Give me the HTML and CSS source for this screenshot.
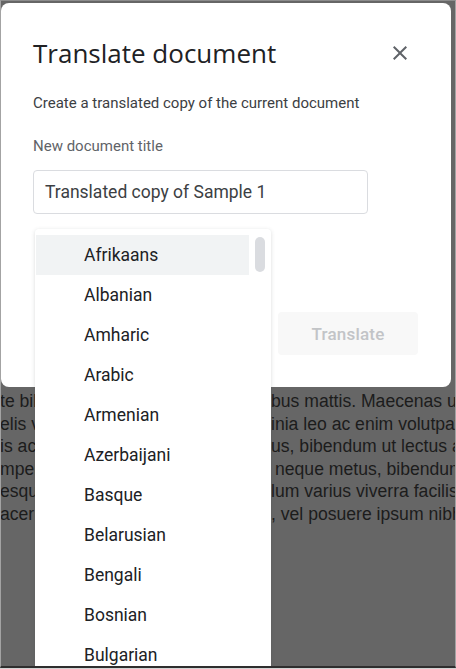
FILE: index.html
```html
<!DOCTYPE html>
<html lang="en">
<head>
<meta charset="utf-8">
<title>Translate document</title>
<link rel="stylesheet" href="styles.css">
</head>
<body>
<div class="frame">
  <div class="doc">
    <div class="line"><span class="l">te bibendum</span><span class="m"></span><span class="r">bus mattis. Maecenas ut</span></div>
    <div class="line"><span class="l">elis vitae</span><span class="m"></span><span class="r">inia leo ac enim volutpat</span></div>
    <div class="line"><span class="l">is ac</span><span class="m"></span><span class="r">us, bibendum ut lectus a</span></div>
    <div class="line"><span class="l">mper</span><span class="m"></span><span class="r ind">neque metus, bibendum</span></div>
    <div class="line"><span class="l">esque</span><span class="m"></span><span class="r">lum varius viverra facilisis</span></div>
    <div class="line"><span class="l">acer</span><span class="m"></span><span class="r">, vel posuere ipsum nibh</span></div>
  </div>

  <div class="dialog">
    <div class="dlg-head">
      <h1 class="dlg-title">Translate document</h1>
      <button class="close-btn" aria-label="Close">
        <svg width="24" height="24" viewBox="0 0 24 24"><path d="M19 6.41L17.59 5 12 10.59 6.41 5 5 6.41 10.59 12 5 17.59 6.41 19 12 13.41 17.59 19 19 17.59 13.41 12z" fill="#5f6368"/></svg>
      </button>
    </div>
    <p class="dlg-sub">Create a translated copy of the current document</p>
    <label class="dlg-label">New document title</label>
    <div class="input">Translated copy of Sample 1</div>
    <div class="select-space"></div>
    <div class="actions">
      <button class="btn-translate">Translate</button>
    </div>
  </div>

  <div class="dropdown">
    <ul class="list">
      <li class="item active">Afrikaans</li>
      <li class="item">Albanian</li>
      <li class="item">Amharic</li>
      <li class="item">Arabic</li>
      <li class="item">Armenian</li>
      <li class="item">Azerbaijani</li>
      <li class="item">Basque</li>
      <li class="item">Belarusian</li>
      <li class="item">Bengali</li>
      <li class="item">Bosnian</li>
      <li class="item">Bulgarian</li>
      <li class="item">Catalan</li>
    </ul>
    <div class="scroll"><div class="thumb"></div></div>
  </div>
</div>
</body>
</html>
```

FILE: styles.css
```css
* { box-sizing: border-box; }
html, body { margin: 0; padding: 0; }
html { background: #d4d4d4; }
body { width: 456px; height: 669px; overflow: hidden; }

.frame {
  position: relative;
  width: 456px;
  height: 668px;
  border-left: 1px solid #a3a3a3;
  border-right: 1px solid #a3a3a3;
  border-top: 1px solid #8c8c8c;
  border-bottom: 2px solid #2e2e2e;
  background: #666666;
  overflow: hidden;
}

.doc {
  padding-top: 389px;
  font-family: "Liberation Sans", Arial, sans-serif;
  font-size: 17.6px;
  line-height: 22.5px;
  color: #1c1c1c;
}
.line {
  display: grid;
  grid-template-columns: 34px 236px 1fr;
  white-space: nowrap;
}
.line span { overflow: hidden; }
.l { text-indent: -1px; }
.r.ind { padding-left: 4px; }

.dialog {
  position: absolute;
  left: 0;
  top: 2px;
  width: 450px;
  height: 384px;
  background: #fff;
  border-radius: 8px;
  padding: 30px 31px 0 32px;
  font-family: Roboto, "Noto Sans", sans-serif;
}
.dlg-head {
  display: flex;
  align-items: center;
  justify-content: space-between;
  height: 40px;
}
.dlg-title {
  margin: 0;
  font-family: "Open Sans", Roboto, sans-serif;
  font-weight: 400;
  font-size: 26px;
  line-height: 34px;
  color: #202124;
}
.close-btn {
  width: 40px;
  height: 40px;
  border: 0;
  padding: 0;
  background: transparent;
  display: flex;
  align-items: center;
  justify-content: center;
}
.dlg-sub {
  margin: 20px 0 0;
  font-size: 15px;
  line-height: 21px;
  color: #3c4043;
}
.dlg-label {
  display: block;
  margin-top: 22px;
  font-size: 15px;
  line-height: 21px;
  color: #5f6368;
}
.input {
  margin-top: 13px;
  width: 335px;
  height: 44px;
  border: 1px solid #dadce0;
  border-radius: 4px;
  padding: 0 11px;
  display: flex;
  align-items: center;
  font-size: 17.5px;
  color: #3c4043;
}
.select-space { height: 98px; }
.actions {
  display: flex;
  justify-content: flex-end;
  padding-right: 2px;
}
.btn-translate {
  width: 140px;
  height: 43px;
  border: 0;
  border-radius: 4px;
  background: #f8f8f8;
  color: #c2c4c7;
  font-family: Roboto, sans-serif;
  font-size: 17px;
  font-weight: 500;
  letter-spacing: 0.2px;
}

.dropdown {
  position: absolute;
  left: 34px;
  top: 228px;
  width: 236px;
  height: 470px;
  background: #fff;
  border-radius: 4px;
  box-shadow: 0 1px 4px rgba(60, 64, 67, 0.18);
  display: flex;
  font-family: Roboto, sans-serif;
}
.list {
  list-style: none;
  margin: 0;
  padding: 6px 0 0 1px;
  width: 214px;
}
.item {
  height: 40px;
  display: flex;
  align-items: center;
  padding-left: 48px;
  font-size: 17.5px;
  color: #202124;
}
.item.active { background: #f1f3f4; }
.scroll { flex: 1; padding: 8px 0 0 6px; }
.thumb {
  width: 10px;
  height: 35px;
  border-radius: 5px;
  background: #dadce0;
}
```
